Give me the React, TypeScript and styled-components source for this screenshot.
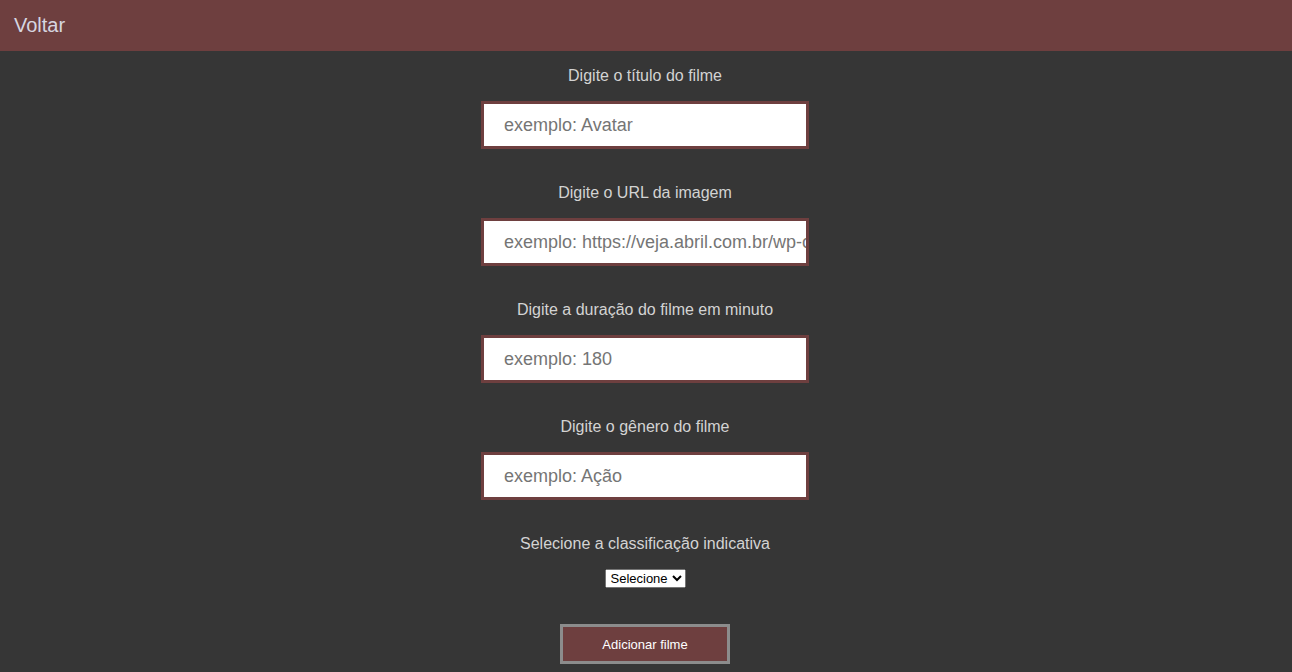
import { useState } from "react";
import styled, { createGlobalStyle } from "styled-components";

const GlobalStyle = createGlobalStyle`
  body {
    margin: 0;
    background-color: #363636;
    font-family: "Liberation Sans", Arial, sans-serif;
  }
`;

const fields = [
  { label: "Digite o título do filme", placeholder: "exemplo: Avatar" },
  {
    label: "Digite o URL da imagem",
    placeholder: "exemplo: https://veja.abril.com.br/wp-content/uploads/2016/05/avatar.jpg",
  },
  { label: "Digite a duração do filme em minuto", placeholder: "exemplo: 180" },
  { label: "Digite o gênero do filme", placeholder: "exemplo: Ação" },
];

export default function App() {
  const [rating, setRating] = useState("");

  return (
    <>
      <GlobalStyle />
      <Header>
        <BackLink href="#">Voltar</BackLink>
      </Header>
      <Form onSubmit={(e) => e.preventDefault()}>
        {fields.map(({ label, placeholder }) => (
          <Field key={label}>
            <Label>{label}</Label>
            <Input type="text" placeholder={placeholder} />
          </Field>
        ))}
        <Field>
          <Label>Selecione a classificação indicativa</Label>
          <Select value={rating} onChange={(e) => setRating(e.target.value)}>
            <option value="">Selecione</option>
            <option value="L">Livre</option>
            <option value="10">10 anos</option>
            <option value="12">12 anos</option>
            <option value="14">14 anos</option>
            <option value="16">16 anos</option>
            <option value="18">18 anos</option>
          </Select>
        </Field>
        <SubmitButton type="submit">Adicionar filme</SubmitButton>
      </Form>
    </>
  );
}

const Header = styled.header`
  height: 51px;
  background-color: #6e3f3f;
  display: flex;
  align-items: center;
  padding: 0 14px;
`;

const BackLink = styled.a`
  color: #d6d6e0;
  font-size: 20px;
  text-decoration: none;
`;

const Form = styled.form`
  display: flex;
  flex-direction: column;
  align-items: center;
  gap: 35px;
  padding: 16px 2px 0 0;
`;

const Field = styled.div`
  display: flex;
  flex-direction: column;
  align-items: center;
  gap: 16px;
`;

const Label = styled.label`
  color: #d3d3d3;
  font-size: 16px;
  line-height: 18px;
`;

const Input = styled.input`
  box-sizing: border-box;
  width: 328px;
  height: 48px;
  border: 3px solid #6e3f3f;
  padding: 0 0 0 20px;
  font-family: "Liberation Sans", Arial, sans-serif;
  font-size: 18px;
  outline: 0;

  &::placeholder {
    color: #757575;
  }
`;

const Select = styled.select`
  width: 81px;
  height: 19px;
  margin-left: 2px;
  font-family: "Liberation Sans", Arial, sans-serif;
  font-size: 13px;
`;

const SubmitButton = styled.button`
  margin-top: 1px;
  width: 170px;
  height: 40px;
  background-color: #6e3f3f;
  border: 3px solid #8c8c8c;
  color: #ffffff;
  font-family: "Liberation Sans", Arial, sans-serif;
  font-size: 13px;
  cursor: pointer;
`;
